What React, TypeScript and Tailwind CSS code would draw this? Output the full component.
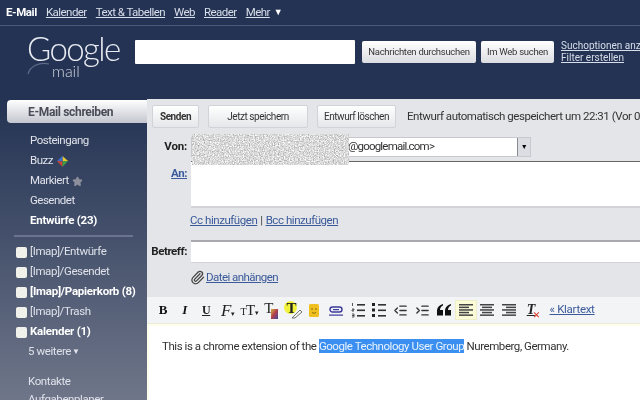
import { IndentDecrease, IndentIncrease, Paperclip, Star } from "lucide-react";
import type { ReactNode } from "react";

const sans = "font-['Roboto','Liberation_Sans',sans-serif]";

function NavLink({ children }: { children: ReactNode }) {
  return <a className="underline text-[#d8deea] text-[11.5px] tracking-[-0.55px] leading-none">{children}</a>;
}

function TopBar() {
  return (
    <div className="h-[26px] shrink-0 flex items-center gap-[9px] pl-[6px] border-b border-[#4a5a7e]">
      <span className="font-bold text-white text-[11.5px] tracking-[-0.4px] leading-none">E-Mail</span>
      <NavLink>Kalender</NavLink>
      <NavLink>Text &amp; Tabellen</NavLink>
      <NavLink>Web</NavLink>
      <NavLink>Reader</NavLink>
      <NavLink>Mehr</NavLink>
      <span className="text-white text-[9px] leading-none -ml-[5px]">▼</span>
    </div>
  );
}

function SearchButton({ children, width }: { children: ReactNode; width: string }) {
  return (
    <button className={`${width} h-[22px] shrink-0 rounded-[2px] bg-gradient-to-b from-white to-[#dcdde1] text-[#333] text-[9.5px] tracking-[-0.3px] leading-none whitespace-nowrap`}>
      {children}
    </button>
  );
}

function Logo() {
  return (
    <div className="relative w-[108px] h-[72px] shrink-0">
      <span className="absolute left-[0px] top-[0px] font-['Lato',sans-serif] font-light text-[#e8ebf2] text-[33px] leading-[30px] tracking-[-1.6px]">Google</span>
      <span className="absolute left-[25px] top-[29px] font-['Lato',sans-serif] font-light text-[#d0d5e0] text-[16px] leading-[18px]">mail</span>
      <svg className="absolute left-[0px] top-[28px]" width="30" height="14" viewBox="0 0 30 14">
        <path d="M1 13C3 5 12 1 22 3" fill="none" stroke="#5f6b88" strokeWidth="1.2" />
      </svg>
    </div>
  );
}

function Header() {
  return (
    <div className="h-[73px] shrink-0 flex items-start pl-[27px]">
      <div className="pt-[7px]">
        <Logo />
      </div>
      <div className="flex items-center pt-[14px]">
        <div className="w-[220px] h-[24px] bg-white rounded-[1px] shrink-0" />
        <div className="w-[7px]" />
        <SearchButton width="w-[114px]">Nachrichten durchsuchen</SearchButton>
        <div className="w-[5px]" />
        <SearchButton width="w-[73px]">Im Web suchen</SearchButton>
        <div className="w-[7px]" />
        <div className="flex flex-col gap-0 text-[10px] leading-[12px] text-[#d8deea] underline whitespace-nowrap">
          <a>Suchoptionen anzeigen</a>
          <a>Filter erstellen</a>
        </div>
      </div>
    </div>
  );
}

function BuzzIcon() {
  return (
    <svg width="13" height="13" viewBox="0 0 13 13">
      <path d="M6.5 1 12 6 6.5 6.5z" fill="#e8c82c" />
      <path d="M1 6 6.5 1 6.5 6.5z" fill="#3a6fd0" />
      <path d="M1 6 6.5 6.5 6.5 12z" fill="#d0442f" />
      <path d="M12 6 6.5 6.5 6.5 12z" fill="#3f9c48" />
    </svg>
  );
}

function MailRow({ children, bold }: { children: ReactNode; bold?: boolean }) {
  return (
    <div className={`h-[20px] flex items-center gap-[3px] pl-[30px] text-[11.5px] leading-none ${bold ? "font-bold text-white tracking-[-0.25px]" : "text-[#dfe2ea] tracking-[-0.5px]"}`}>
      {children}
    </div>
  );
}

function LabelRow({ children, bold }: { children: ReactNode; bold?: boolean }) {
  return (
    <div className={`h-[20px] flex items-center pl-[16px] gap-[3px] text-[11.5px] leading-none whitespace-nowrap ${bold ? "font-bold text-white tracking-[-0.25px]" : "text-[#dfe2ea] tracking-[-0.4px]"}`}>
      <span className="w-[11px] h-[11px] rounded-[2px] bg-[#eff1ea] shrink-0" />
      {children}
    </div>
  );
}

function Sidebar() {
  return (
    <div className="w-[147px] shrink-0 h-full overflow-hidden">
      <div className="h-[23px] mt-[1px] ml-[7px] flex items-center pl-[21px] rounded-l-[4px] bg-gradient-to-b from-white to-[#c4c6cf] font-bold text-[#4a4d58] text-[12px] tracking-[-0.35px]">
        E-Mail schreiben
      </div>
      <div className="pt-[8px]">
        <MailRow>Posteingang</MailRow>
        <MailRow>Buzz <BuzzIcon /></MailRow>
        <MailRow>Markiert <Star size={11} className="fill-[#8d909c] text-[#8d909c]" /></MailRow>
        <MailRow>Gesendet</MailRow>
        <MailRow bold>Entwürfe (23)</MailRow>
      </div>
      <div className="h-[2px] mx-[14px] mt-[4px] mb-[5px] bg-[#6a7390]" />
      <LabelRow>[Imap]/Entwürfe</LabelRow>
      <LabelRow>[Imap]/Gesendet</LabelRow>
      <LabelRow bold>[Imap]/Papierkorb (8)</LabelRow>
      <LabelRow>[Imap]/Trash</LabelRow>
      <LabelRow bold>Kalender (1)</LabelRow>
      <div className="h-[20px] flex items-center pl-[28px] text-[11.5px] tracking-[-0.4px] leading-none text-[#dfe2ea]">
        5 weitere<span className="text-[8px] ml-[1px]">▼</span>
      </div>
      <div className="mt-[10px] pl-[28px] text-[11.5px] tracking-[-0.4px] leading-[18px] text-[#dfe2ea]">
        <div>Kontakte</div>
        <div>Aufgabenplaner</div>
      </div>
    </div>
  );
}

function ActionButton({ children, width, bold }: { children: ReactNode; width: string; bold?: boolean }) {
  return (
    <button className={`${width} h-[23px] shrink-0 border border-[#d2d3d8] rounded-[2px] bg-gradient-to-b from-white to-[#e6e7ea] text-[#333] text-[10px] leading-none whitespace-nowrap ${bold ? "font-bold" : ""}`}>
      {children}
    </button>
  );
}

function ToolCell({ children, active }: { children: ReactNode; active?: boolean }) {
  return (
    <div className={`w-[21.65px] h-[20px] shrink-0 flex items-center justify-center ${active ? "bg-[#fbfbd8] border border-[#eeeec8]" : ""}`}>
      {children}
    </div>
  );
}

function AlignIcon({ side }: { side: "left" | "center" | "right" }) {
  const widths = [14, 10, 14, 10, 14];
  return (
    <svg width="14" height="14" viewBox="0 0 14 14">
      {widths.map((w, i) => (
        <rect
          key={i}
          x={side === "left" ? 0 : side === "center" ? (14 - w) / 2 : 14 - w}
          y={1 + i * 2.6}
          width={w}
          height="1.5"
          fill="#444"
        />
      ))}
    </svg>
  );
}

function OrderedIcon() {
  return (
    <svg width="14" height="16" viewBox="0 0 14 16">
      <path d="M1.5 1v3M1 7h2v1H1v1h2M1 12h2v3H1M1 13.5h2" fill="none" stroke="#444" strokeWidth="0.9" />
      <rect x="6" y="2" width="8" height="1.6" fill="#333" />
      <rect x="6" y="7.5" width="8" height="1.6" fill="#333" />
      <rect x="6" y="13" width="8" height="1.6" fill="#333" />
    </svg>
  );
}

function BulletIcon() {
  return (
    <svg width="14" height="16" viewBox="0 0 14 16">
      <rect x="0" y="1" width="3" height="3" fill="#222" />
      <rect x="0" y="6.5" width="3" height="3" fill="#222" />
      <rect x="0" y="12" width="3" height="3" fill="#222" />
      <rect x="6" y="2" width="8" height="1.6" fill="#333" />
      <rect x="6" y="7.5" width="8" height="1.6" fill="#333" />
      <rect x="6" y="13" width="8" height="1.6" fill="#333" />
    </svg>
  );
}

function QuoteIcon() {
  return (
    <svg width="14" height="12" viewBox="0 0 14 12">
      <path d="M6 0C2.5 1 0 3.5 0 7v4.5h6V6H3c0-2 1-3.5 3-4.5zM14 0c-3.5 1-6 3.5-6 7v4.5h6V6h-3c0-2 1-3.5 3-4.5z" fill="#111" />
    </svg>
  );
}

function EditorToolbar() {
  return (
    <div className="h-[27px] shrink-0 flex items-center pl-[5px] bg-[#f3f4f6] border-b border-[#ecebd8]">
      <ToolCell><span className="font-['Liberation_Serif',serif] font-bold text-[13px] text-[#111]">B</span></ToolCell>
      <ToolCell><span className="font-['Liberation_Serif',serif] font-bold italic text-[13px] text-[#111]">I</span></ToolCell>
      <ToolCell><span className="font-['Liberation_Serif',serif] font-bold underline text-[12px] text-[#222]">U</span></ToolCell>
      <ToolCell><span className="font-['Liberation_Serif',serif] italic text-[17px] leading-none text-[#222] whitespace-nowrap">F<span className="text-[7px] not-italic">▾</span></span></ToolCell>
      <ToolCell><span className="font-['Liberation_Serif',serif] text-[15px] leading-none text-[#222] whitespace-nowrap"><span className="text-[10px]">T</span>T<span className="text-[7px]">▾</span></span></ToolCell>
      <ToolCell>
        <span className="relative font-['Liberation_Serif',serif] text-[15px] leading-none text-[#222] -ml-[5px] -mt-[4px]">
          T
          <span className="absolute left-[7px] top-[8px] w-[7px] h-[10px] bg-gradient-to-br from-[#c8b23a] via-[#b23a4a] to-[#3a3a9a]" />
        </span>
      </ToolCell>
      <ToolCell>
        <span className="relative font-['Liberation_Serif',serif] font-bold text-[15px] leading-none text-[#222] -ml-[3px] -mt-[4px]">
          <span className="absolute left-[-2px] top-[0px] w-[13px] h-[13px] rounded-full bg-[#f2f23a]" />
          <span className="relative">T</span>
          <svg className="absolute left-[5px] top-[7px]" width="12" height="11" viewBox="0 0 12 11">
            <path d="M1 10 9 2l2 2-7 6H1z" fill="#f4f4e8" stroke="#555" strokeWidth="0.8" />
          </svg>
        </span>
      </ToolCell>
      <ToolCell>
        <svg width="10" height="13" viewBox="0 0 10 13">
          <rect width="10" height="13" rx="1.5" fill="#f0c020" />
          <circle cx="3" cy="5" r="0.8" fill="#7a5a00" />
          <circle cx="7" cy="5" r="0.8" fill="#7a5a00" />
          <path d="M3 8.5q2 1.6 4 0" fill="none" stroke="#7a5a00" strokeWidth="0.8" />
        </svg>
      </ToolCell>
      <ToolCell>
        <svg width="14" height="11" viewBox="0 0 14 11">
          <rect x="1" y="2" width="12" height="5" rx="2.5" fill="none" stroke="#3a3a9a" strokeWidth="1.4" />
          <rect x="4" y="4" width="6" height="1.2" fill="#3a3a9a" />
          <rect y="9.5" width="14" height="1.2" fill="#3a3a9a" />
        </svg>
      </ToolCell>
      <ToolCell><OrderedIcon /></ToolCell>
      <ToolCell><BulletIcon /></ToolCell>
      <ToolCell><IndentDecrease size={15} strokeWidth={2.2} className="text-[#333]" /></ToolCell>
      <ToolCell><IndentIncrease size={15} strokeWidth={2.2} className="text-[#333]" /></ToolCell>
      <ToolCell><QuoteIcon /></ToolCell>
      <ToolCell active><AlignIcon side="left" /></ToolCell>
      <ToolCell><AlignIcon side="center" /></ToolCell>
      <ToolCell><AlignIcon side="right" /></ToolCell>
      <ToolCell>
        <span className="relative font-['Liberation_Serif',serif] italic font-bold underline text-[14px] leading-none text-[#222]">
          T
          <span className="absolute left-[6px] top-[5px] text-[#d8301f] text-[13px] leading-none font-bold not-italic">×</span>
        </span>
      </ToolCell>
      <a className="ml-[8px] text-[11.5px] tracking-[-0.3px] leading-none text-[#3a5a9a] underline whitespace-nowrap">« Klartext</a>
    </div>
  );
}

function Compose() {
  return (
    <div className="flex-1 min-w-0 h-full bg-[#e4e5e9] flex flex-col text-[11.5px] tracking-[-0.45px]">
      <div className="h-[5px] shrink-0" />
      <div className="h-[25px] shrink-0 flex items-center pl-[5px] gap-[9px] whitespace-nowrap overflow-hidden">
        <ActionButton width="w-[47px]" bold>Senden</ActionButton>
        <ActionButton width="w-[100px]">Jetzt speichern</ActionButton>
        <ActionButton width="w-[79px]">Entwurf löschen</ActionButton>
        <span className="ml-[2px] text-[#333] text-[11.5px] leading-none">Entwurf automatisch gespeichert um 22:31 (Vor 0 Minuten)</span>
      </div>
      <div className="h-[28px] shrink-0 flex items-center pt-[8px]">
        <span className="w-[40px] mr-[1px] text-right font-bold text-[#222] tracking-[-0.2px]">Von:</span>
        <div className="relative ml-[3px] w-[340px] h-[20px] bg-white border border-[#c8c9ce] flex items-center">
          <span className="pl-[156px] text-[#333] leading-none tracking-[-0.8px]">@googlemail.com&gt;</span>
          <span className="absolute right-0 top-0 w-[13px] h-[18px] bg-[#dcdde2] border-l border-[#8a8b92] flex items-center justify-center text-[7px] text-black">▼</span>
          <svg className="absolute left-0 top-[-4px]" width="157" height="31" viewBox="0 0 157 31">
            <filter id="noise" x="0" y="0" width="100%" height="100%" colorInterpolationFilters="sRGB">
              <feTurbulence type="fractalNoise" baseFrequency="0.8" numOctaves="2" seed="4" />
              <feColorMatrix values="0.6 0 0 0 0.55  0.6 0 0 0 0.55  0.6 0 0 0 0.55  0 0 0 0 1" />
            </filter>
            <rect width="157" height="31" filter="url(#noise)" />
          </svg>
        </div>
      </div>
      <div className="flex shrink-0 mt-[4px] h-[47px]">
        <a className="w-[40px] mr-[1px] pt-[7px] text-right font-bold text-[#3a5a9a] underline leading-none">An:</a>
        <div className="ml-[3px] flex-1 bg-white border-t border-t-[#666] border-b-2 border-b-[#d3d4d8]" />
      </div>
      <div className="h-[24px] shrink-0 pl-[43px] pt-[2px] flex items-center gap-[3px] text-[#3a5a9a] leading-none">
        <a className="underline">Cc hinzufügen</a>
        <span className="text-[#444]">|</span>
        <a className="underline">Bcc hinzufügen</a>
      </div>
      <div className="flex items-center shrink-0 h-[23px] mt-[8px]">
        <span className="w-[40px] mr-[1px] text-right font-bold text-[#222] whitespace-nowrap">Betreff:</span>
        <div className="ml-[3px] flex-1 h-full bg-white border-t-2 border-t-[#a8a9ae] border-b border-b-[#d3d4d8]" />
      </div>
      <div className="h-[26px] shrink-0 pl-[43px] pt-[3px] flex items-center gap-[1px]">
        <Paperclip size={15} className="text-[#444]" />
        <a className="underline text-[#3a5a9a] leading-none tracking-[-0.55px]">Datei anhängen</a>
      </div>
      <div className="h-[8px] shrink-0" />
      <EditorToolbar />
      <div className="flex-1 bg-white border-t-2 border-l-2 border-[#fdfdec] pl-[13px] pt-[13px] text-[#333] text-[11.5px] tracking-[-0.45px] leading-[15px] whitespace-nowrap">
        This is a chrome extension of the <span className="bg-[#3a8ff0] text-[#e8f2ff]">Google Technology User Group</span> Nuremberg, Germany.
      </div>
    </div>
  );
}

export default function App() {
  return (
    <div className={`w-[640px] h-[400px] overflow-hidden flex flex-col bg-[#243353] blur-[0.4px] ${sans}`}>
      <TopBar />
      <Header />
      <div className="flex-1 min-h-0 flex bg-gradient-to-b from-[#243353] to-[#6f7689]">
        <Sidebar />
        <Compose />
      </div>
    </div>
  );
}
